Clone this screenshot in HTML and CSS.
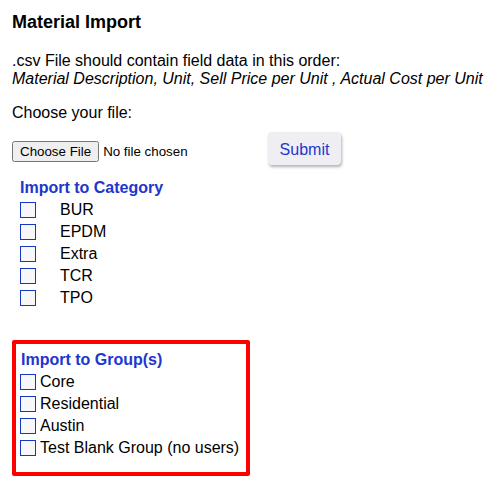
FILE: index.html
```html
<!DOCTYPE html>
<html lang="en">
<head>
<meta charset="utf-8">
<title>Material Import</title>
<link rel="stylesheet" href="styles.css">
</head>
<body>
  <main class="page">
    <h1 class="title">Material Import</h1>

    <p class="hint">.csv File should contain field data in this order:<br>
      <em>Material Description, Unit, Sell Price per Unit , Actual Cost per Unit</em></p>

    <p class="choose">Choose your file:</p>

    <form class="upload">
      <div class="file-cell"><input class="file" type="file" accept=".csv"></div>
      <button class="submit" type="button">Submit</button>
    </form>

    <section class="category">
      <h2 class="section-title">Import to Category</h2>
      <label class="row cat-row"><input type="checkbox" class="check"><span>BUR</span></label>
      <label class="row cat-row"><input type="checkbox" class="check"><span>EPDM</span></label>
      <label class="row cat-row"><input type="checkbox" class="check"><span>Extra</span></label>
      <label class="row cat-row"><input type="checkbox" class="check"><span>TCR</span></label>
      <label class="row cat-row"><input type="checkbox" class="check"><span>TPO</span></label>
    </section>

    <section class="groups">
      <h2 class="section-title">Import to Group(s)</h2>
      <label class="row grp-row"><input type="checkbox" class="check"><span>Core</span></label>
      <label class="row grp-row"><input type="checkbox" class="check"><span>Residential</span></label>
      <label class="row grp-row"><input type="checkbox" class="check"><span>Austin</span></label>
      <label class="row grp-row"><input type="checkbox" class="check"><span>Test Blank Group (no users)</span></label>
    </section>
  </main>
</body>
</html>
```

FILE: styles.css
```css
html, body {
  margin: 0;
  padding: 0;
  background: #ffffff;
}

body {
  font-family: "Liberation Sans", Arial, sans-serif;
  font-size: 16px;
  color: #000000;
}

.page {
  padding: 0 12px;
}

.title {
  font-size: 18px;
  font-weight: bold;
  margin: 12px 0 0;
  line-height: normal;
}

.hint {
  margin: 19px 0 0;
  line-height: normal;
}

.choose {
  margin: 16px 0 0;
  line-height: normal;
}

/* file picker + submit */
.upload {
  display: flex;
  align-items: flex-start;
  margin: 10px 0 0;
}

.file-cell {
  width: 256px;
  padding-top: 9px;
}

.file {
  font-family: "Liberation Sans", Arial, sans-serif;
  font-size: 13.333px;
  color: #000000;
}

.submit {
  width: 73px;
  height: 33px;
  border: none;
  border-radius: 4px;
  background: #efeff3;
  box-shadow: 1px 2px 3px rgba(0, 0, 0, 0.3);
  color: #2138d0;
  font-family: "Liberation Sans", Arial, sans-serif;
  font-size: 16px;
  padding: 3px 0 0;
}

/* checkbox lists */
.section-title {
  font-size: 16px;
  font-weight: bold;
  color: #2136cc;
  margin: 0 0 2px;
  line-height: normal;
}

.row {
  display: flex;
  align-items: center;
  height: 22px;
}

.check {
  appearance: none;
  -webkit-appearance: none;
  width: 16px;
  height: 16px;
  margin: 0;
  border: 1px solid #1437c4;
  background: #f7f7fa;
  box-sizing: border-box;
  flex: none;
}

.category {
  padding: 14px 0 0 8px;
}

.cat-row .check {
  margin-right: 24px;
}

.groups {
  display: inline-block;
  margin-top: 31px;
  border: 4px solid #ff0000;
  border-radius: 2px;
  padding: 7px 7px 13px 4px;
}

.groups .section-title {
  padding-left: 1px;
}

.grp-row .check {
  margin-right: 4px;
}
```
